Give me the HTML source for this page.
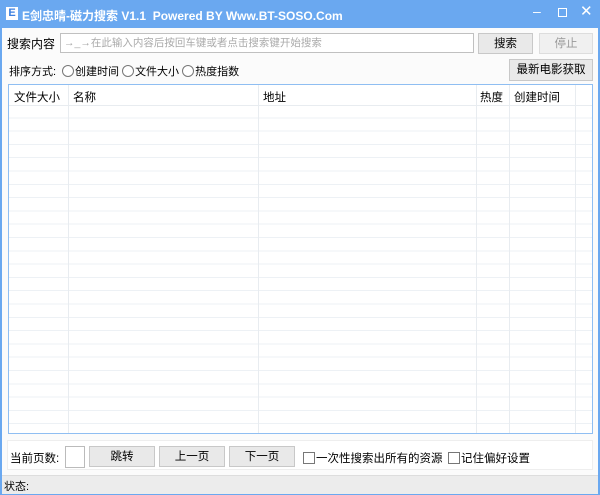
<!DOCTYPE html><html><head><meta charset="utf-8"><style>
body{margin:0;width:600px;height:495px;overflow:hidden;font-family:"Liberation Sans","Noto Sans CJK SC",sans-serif;font-size:11.5px;color:#000}
.win{position:absolute;left:0;top:0;width:600px;height:495px;background:#6aa8f0}
.body{position:absolute;left:2px;top:28px;width:596px;height:465px;background:#fbfbfb}
.a{position:absolute;white-space:nowrap}
.btn{position:absolute;background:#e9e9e9;border:1px solid #c8c8c8;box-sizing:border-box;text-align:center;line-height:20px}
.rad{display:inline-block;width:10px;height:10px;border:1px solid #777;border-radius:50%;vertical-align:-2px;margin-right:1px;background:#fff}
.chk{display:inline-block;width:10px;height:10px;border:1px solid #777;vertical-align:-2px;margin-right:1px;background:#fff}
.grid{position:absolute;left:8px;top:84px;width:583px;height:348px;border:1px solid #8fbef2;background:#fff;
background-image:repeating-linear-gradient(#fff 0,#fff 12.3px,#edf1f5 12.3px,#edf1f5 13.3px);background-position:0 20px}
.hd{position:absolute;left:0;top:0;width:583px;height:20px;background:#fff;border-bottom:1px solid #e8ecf0}
.cl{position:absolute;top:0;bottom:0;width:1px;background:#e8ecf0}
</style></head><body><div class="win">
<div class="a" style="left:6px;top:7px;width:12px;height:13px;background:#fff;color:#3b7fe0;font-weight:bold;font-size:11px;text-align:center;line-height:13px">E</div>
<div class="a" style="left:22px;top:7px;color:#fff;font-weight:bold;font-size:12px">E剑忠晴-磁力搜索 V1.1&nbsp; Powered BY Www.BT-SOSO.Com</div>
<div class="a" style="left:533px;top:3px;color:#fff;font-size:14px">–</div>
<div class="a" style="left:558px;top:8px;width:7px;height:7px;border:1.5px solid #fff"></div>
<div class="a" style="left:580px;top:2px;color:#fff;font-size:15px">✕</div>
<div class="body"></div>
<div class="a" style="left:7px;top:35px;font-size:12px">搜索内容</div>
<div class="a" style="left:60px;top:33px;width:414px;height:20px;border:1px solid #c0c0c0;background:#fff;box-sizing:border-box;color:#aaa;font-size:10.5px;line-height:18px;padding-left:3px">→_→在此输入内容后按回车键或者点击搜索键开始搜索</div>
<div class="btn" style="left:478px;top:33px;width:55px;height:21px">搜索</div>
<div class="btn" style="left:539px;top:33px;width:54px;height:21px;color:#999;background:#f0f0f0;border-color:#ddd">停止</div>
<div class="a" style="left:9px;top:63px;font-size:11px">排序方式:</div>
<div class="a" style="left:62px;top:63px;font-size:11px"><span class="rad"></span>创建时间 <span class="rad"></span>文件大小 <span class="rad"></span>热度指数</div>
<div class="btn" style="left:509px;top:59px;width:84px;height:22px;line-height:21px">最新电影获取</div>
<div class="grid"><div class="hd"></div>
<div class="cl" style="left:59px"></div><div class="cl" style="left:249px"></div><div class="cl" style="left:467px"></div><div class="cl" style="left:500px"></div><div class="cl" style="left:566px"></div>
<div class="a" style="left:5px;top:4px">文件大小</div><div class="a" style="left:64px;top:4px">名称</div><div class="a" style="left:254px;top:4px">地址</div><div class="a" style="left:471px;top:4px">热度</div><div class="a" style="left:505px;top:4px">创建时间</div>
</div>
<div class="a" style="left:7px;top:440px;width:586px;height:30px;background:#fff;border:1px solid #eee;box-sizing:border-box"></div>
<div class="a" style="left:10px;top:450px">当前页数:</div>
<div class="a" style="left:65px;top:446px;width:20px;height:22px;border:1px solid #bbb;background:#fff;box-sizing:border-box"></div>
<div class="btn" style="left:89px;top:446px;width:66px;height:21px">跳转</div>
<div class="btn" style="left:159px;top:446px;width:66px;height:21px">上一页</div>
<div class="btn" style="left:229px;top:446px;width:66px;height:21px">下一页</div>
<div class="a" style="left:303px;top:450px"><span class="chk"></span>一次性搜索出所有的资源</div>
<div class="a" style="left:448px;top:450px"><span class="chk"></span>记住偏好设置</div>
<div class="a" style="left:2px;top:475px;width:596px;height:18px;background:#ececec;border-top:1px solid #ddd"></div>
<div class="a" style="left:4px;top:478px;font-size:11px">状态:</div>
</div></body></html>
